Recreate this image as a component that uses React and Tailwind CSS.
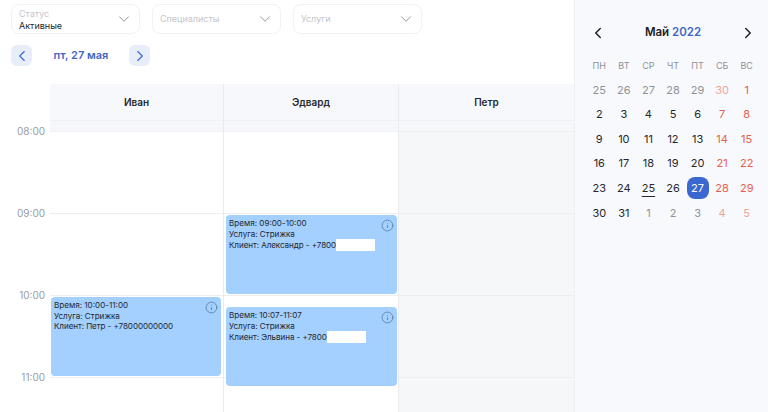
import { ChevronDown, ChevronLeft, ChevronRight, Info } from 'lucide-react'

const weekDays = ['ПН', 'ВТ', 'СР', 'ЧТ', 'ПТ', 'СБ', 'ВС']

const days = [
  [25, 'muted'], [26, 'muted'], [27, 'muted'], [28, 'muted'], [29, 'muted'], [30, 'mutedRed'], [1, 'red'],
  [2], [3], [4], [5], [6], [7, 'red'], [8, 'red'],
  [9], [10], [11], [12], [13], [14, 'red'], [15, 'red'],
  [16], [17], [18], [19], [20], [21, 'red'], [22, 'red'],
  [23], [24], [25, 'today'], [26], [27, 'selected'], [28, 'red'], [29, 'red'],
  [30], [31], [1, 'muted'], [2, 'muted'], [3, 'muted'], [4, 'mutedRed'], [5, 'mutedRed'],
]

const dayStyles = {
  muted: 'text-[#8f9297]',
  mutedRed: 'text-[#f0a596]',
  red: 'text-[#e8604a]',
  today: 'text-[#26282c] underline underline-offset-[4px]',
  selected: 'text-white bg-[#3b68d0] rounded-lg',
}

const FilterSelect = ({ label, value }) => (
  <div className="w-[129px] h-[30px] flex items-center justify-between pl-[7px] pr-[6px] bg-white border border-[#f1f2f5] rounded-lg">
    {value ? (
      <div className="flex flex-col text-[9px] leading-[12px] pt-[1px]">
        <span className="text-[#c4c6cb]">{label}</span>
        <span className="text-[#26282c]">{value}</span>
      </div>
    ) : (
      <span className="text-[9px] text-[#c4c6cb]">{label}</span>
    )}
    <ChevronDown size={18} strokeWidth={1.1} className="text-[#7d8087]" />
  </div>
)

const NavButton = ({ children }) => (
  <button className="w-[21px] h-[21px] flex items-center justify-center bg-[#e8edfa] rounded-md text-[#3b68d0]">
    {children}
  </button>
)

const EventCard = ({ className, time, client, phone, mask }) => (
  <div className={`absolute h-[79px] bg-[#a3d0ff] rounded-[4px] px-[3px] pt-[3px] text-[#23272e] text-[8.1px] leading-[10.7px] ${className}`}>
    <div>Время: {time}</div>
    <div>Услуга: Стрижка</div>
    <div className="flex items-center">
      <span className="tracking-[-0.08px]">Клиент: {client} - {phone}</span>
      {mask && <span className="w-[39px] h-[12px] bg-white" />}
    </div>
    <Info size={13} strokeWidth={1.25} className="absolute top-[3.5px] right-[3px] text-[#4a6a94]" />
  </div>
)

const HourRows = () => (
  <>
    <div className="h-[12px] bg-[#f6f7fa] border-t border-b border-[#eff0f4]" />
    <div className="h-[82px] border-b border-[#eceef2]" />
    <div className="h-[82px] border-b border-[#eceef2]" />
    <div className="h-[82px] border-b border-[#eceef2]" />
    <div className="h-[82px] border-b border-[#eceef2]" />
  </>
)

export default function App() {
  return (
    <div className="flex w-[768px] h-[412px] overflow-hidden bg-white font-['Inter',sans-serif]">
      <div className="w-[574px] shrink-0 flex flex-col">
        {/* Filters */}
        <div className="flex gap-[12px] pl-[11px] pt-[4px]">
          <FilterSelect label="Статус" value="Активные" />
          <FilterSelect label="Специалисты" />
          <FilterSelect label="Услуги" />
        </div>

        {/* Date nav */}
        <div className="flex items-center pl-[11px] mt-[11px]">
          <NavButton><ChevronLeft size={18} strokeWidth={1.5} /></NavButton>
          <span className="w-[97px] pl-[1px] text-center text-[11px] font-semibold text-[#3f68c4]">пт, 27 мая</span>
          <NavButton><ChevronRight size={18} strokeWidth={1.5} /></NavButton>
        </div>

        {/* Schedule */}
        <div className="flex mt-[18px] flex-1">
          <div className="w-[50px] shrink-0 pt-[40px] flex flex-col items-end pr-[5px] text-[10px] leading-[15px] text-[#9a9ca1]">
            <div className="h-[82px]">08:00</div>
            <div className="h-[82px]">09:00</div>
            <div className="h-[82px]">10:00</div>
            <div className="h-[82px]">11:00</div>
          </div>

          <div className="w-[174px] border-r border-[#e9ebef]">
            <div className="h-[36px] flex items-center justify-center bg-[#f7f8fb] text-[10px] font-semibold text-[#26282c]">Иван</div>
            <div className="relative">
              <HourRows />
              <EventCard className="top-[177px] left-[1px] right-[2px]" time="10:00-11:00" client="Петр" phone="+78000000000" />
            </div>
          </div>

          <div className="w-[175px] border-r border-[#e9ebef]">
            <div className="h-[36px] flex items-center justify-center bg-[#f7f8fb] text-[10px] font-semibold text-[#26282c]">Эдвард</div>
            <div className="relative">
              <HourRows />
              <EventCard className="top-[95px] left-[2px] right-[1px]" time="09:00-10:00" client="Александр" phone="+7800" mask />
              <EventCard className="top-[187px] left-[2px] right-[1px]" time="10:07-11:07" client="Эльвина" phone="+7800" mask />
            </div>
          </div>

          <div className="flex-1">
            <div className="h-[36px] flex items-center justify-center bg-[#f7f8fb] text-[10px] font-semibold text-[#26282c]">Петр</div>
            <div className="bg-[#f6f7f9] h-full">
              <HourRows />
            </div>
          </div>
        </div>
      </div>

      {/* Month calendar */}
      <div className="flex-1 bg-[#f8f9fc] border-l border-[#eef0f4] pl-[12px] pr-[9px]">
        <div className="h-[18px] mt-[24px] flex items-center justify-between pl-[2px] pr-[2px]">
          <ChevronLeft size={18} strokeWidth={2} className="text-[#1f2125]" />
          <div className="text-[11.5px] font-semibold text-[#1f2125]">
            Май <span className="text-[#3f68c4]">2022</span>
          </div>
          <ChevronRight size={18} strokeWidth={2} className="text-[#1f2125]" />
        </div>
        <div className="grid grid-cols-7 w-[172px] mt-[11px] auto-rows-[24.6px] text-center">
          {weekDays.map((d) => (
            <div key={d} className="flex items-center justify-center text-[9px] text-[#8f9297]">{d}</div>
          ))}
          {days.map(([n, kind], i) => (
            <div key={i} className="flex items-center justify-center">
              <span className={`w-[22px] h-[22px] flex items-center justify-center text-[11px] ${kind ? dayStyles[kind] : 'text-[#26282c]'}`}>
                {n}
              </span>
            </div>
          ))}
        </div>
      </div>
    </div>
  )
}
